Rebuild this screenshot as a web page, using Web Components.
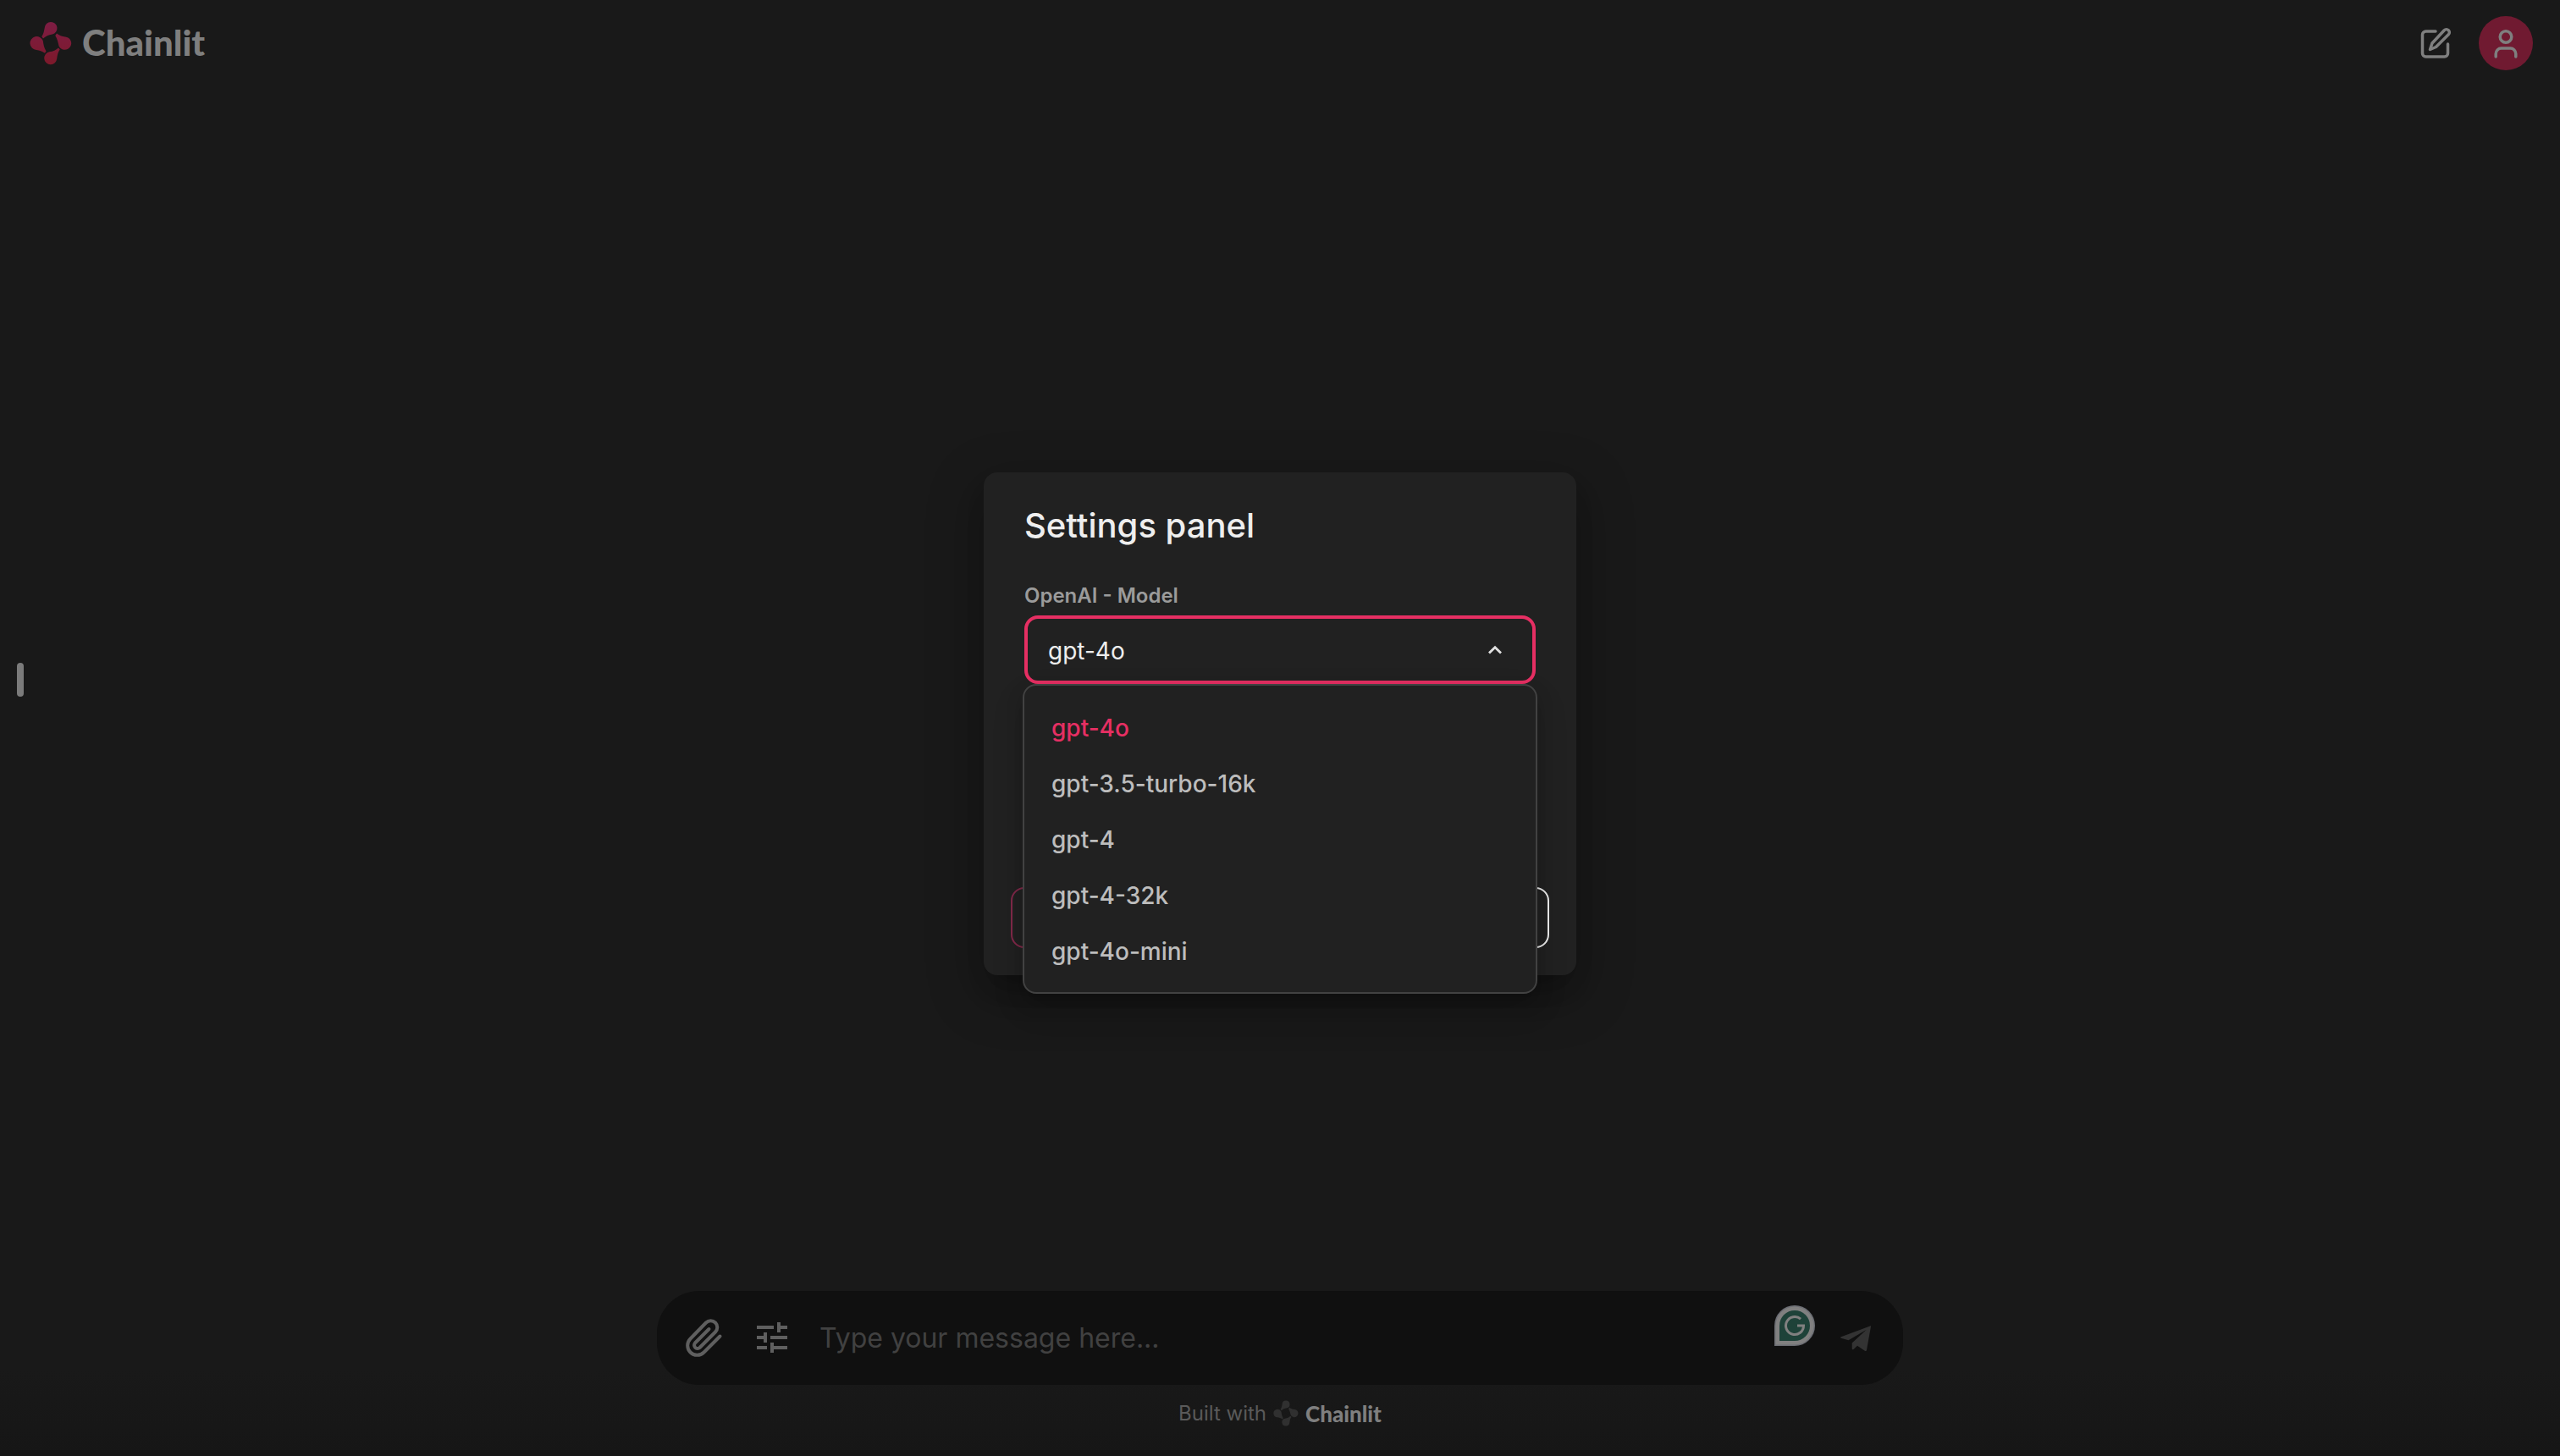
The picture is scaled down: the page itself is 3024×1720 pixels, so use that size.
<!DOCTYPE html>
<html lang="en">
<head>
<meta charset="utf-8">
<meta name="viewport" content="width=device-width, initial-scale=1">
<title>Chainlit</title>
<style>
  html, body { height: 100%; }
  body { margin: 0; background: #191919; font-family: Inter, "Liberation Sans", sans-serif; }
</style>
</head>
<body>
<chat-app></chat-app>
<script>
const define = (name, html, setup) => {
  const tpl = document.createElement('template');
  tpl.innerHTML = html;
  customElements.define(name, class extends HTMLElement {
    constructor() {
      super();
      this.attachShadow({ mode: 'open' }).append(tpl.content.cloneNode(true));
    }
    connectedCallback() { if (setup) setup(this, this.shadowRoot); }
  });
};

define('chain-mark', `
<style>
  :host { display: block; width: 50px; height: 52px; flex: none; }
  svg { display: block; width: 100%; height: 100%; }
</style>
<svg viewBox="0 0 50 52" aria-hidden="true">
  <defs>
    <linearGradient id="g" gradientUnits="userSpaceOnUse" x1="0" y1="0" x2="0" y2="52">
      <stop offset="0" stop-color="var(--mark-from, #7d1d44)"/><stop offset="1" stop-color="var(--mark-to, #7d192a)"/>
    </linearGradient>
  </defs>
  <g fill="url(#g)">
    <path d="M25 1a7.4 7.4 0 0 1 1.8 14.6C22 16.500 19 18 16 20.500L14.300 18.200C16.500 15 17 12 17.700 8A7.400 7.400 0 0 1 25 1Z"/>
    <path d="M32 14.500C35 17 38 18 42 18.400A7.700 7.700 0 1 1 34.600 29.500C33.500 25 33 21.500 30.300 17Z"/>
    <path d="M34 31.500L35.700 33.500C33.300 37 32.800 40 32.200 44.300A7.500 7.500 0 1 1 23.300 36.300C28 35.700 31 34.200 34 31.500Z"/>
    <path d="M18 37.800C14.500 35.300 12 34.300 8 33.900A7.900 7.900 0 1 1 15.700 23C16.500 28 17 31.500 19.500 35.500Z"/>
  </g>
</svg>`);

define('brand-name', `
<style>
  :host { display: block; padding-bottom: 2px; font: 900 42px/48px Lato, "Open Sans", sans-serif; color: #7f7f7f; }
</style>
<slot></slot>`);

define('app-header', `
<style>
  :host { display: flex; justify-content: space-between; align-items: center; padding: 19px 32px 19px 35px; }
  .brand { display: flex; align-items: center; gap: 12px; height: 64px; text-decoration: none; }
  nav { display: flex; align-items: center; gap: 30px; }
  button { display: grid; place-items: center; border: 0; padding: 0; background: none; width: 40px; height: 40px; }
  svg { display: block; }
  .user { width: 64px; height: 64px; border-radius: 50%; background: #701a31; }
</style>
<a class="brand" href="#" aria-label="Chainlit home"><chain-mark></chain-mark><brand-name>Chainlit</brand-name></a>
<nav>
  <button type="button" aria-label="New chat">
    <svg width="40" height="40" viewBox="0 0 40 40" fill="none" stroke="#7f7f7f" stroke-width="3.500" stroke-linecap="round" stroke-linejoin="round">
      <path d="M19 6H7.500a4 4 0 0 0-4 4V32a4 4 0 0 0 4 4H29.500a4 4 0 0 0 4-4V21"/>
      <path d="M29.300 4.700a3.500 3.500 0 0 1 5 5L19.500 24.500 12.500 27.500 15 20Z"/>
    </svg>
  </button>
  <button type="button" class="user" aria-label="User menu">
    <svg width="40" height="40" viewBox="0 0 40 40" fill="none" stroke="#7f7f7f" stroke-width="3.500" stroke-linecap="round">
      <circle cx="20" cy="12.500" r="6.800"/><path d="M8.200 36V32.500a6.500 6.500 0 0 1 6.500-6.500H25.300a6.500 6.500 0 0 1 6.500 6.500V36"/>
    </svg>
  </button>
</nav>`);

define('message-composer', `
<style>
  :host { display: block; width: 100%; }
  form { display: flex; align-items: center; box-sizing: border-box; height: 111px; margin: 0; padding: 0 36px 0 32px; border-radius: 50px; background: #101010; }
  button { display: block; border: 0; padding: 0; background: none; flex: none; }
  svg { display: block; }
  .tune { margin-left: 32px; }
  input { flex: 1; min-width: 0; margin: 0 0 0 34px; padding: 0; border: 0; outline: 0; background: none; color: #7f7f7f; font: 400 32px/48px Inter, sans-serif; }
  input::placeholder { color: #414141; opacity: 1; }
  .assist { margin: 0 28px 30px 0; }
</style>
<form>
  <button type="button" aria-label="Attach files">
    <svg width="50" height="56" viewBox="1 1 50 56" fill="none" stroke="#5f5f5f" stroke-width="4" stroke-linecap="round" stroke-linejoin="round">
      <path d="M43.500 26.500L24.500 45.500a11.300 11.300 0 0 1-16-16L27 10.500a7.700 7.700 0 0 1 11 11L19.500 40a3.900 3.900 0 0 1-5.500-5.500L30.500 18"/>
    </svg>
  </button>
  <button type="button" class="tune" aria-label="Settings">
    <svg width="44" height="44" viewBox="0 -1 44 44" fill="#5f5f5f">
      <path d="M4 6H24V10H4ZM28 2H32V6H40V10H32V14H28ZM4 18H12V14H16V26H12V22H4ZM20 18H40V22H20ZM4 30H16V34H4ZM20 26H24V30H40V34H24V38H20Z"/>
    </svg>
  </button>
  <input type="text" aria-label="Message" placeholder="Type your message here...">
  <button type="button" class="assist" aria-label="Writing assistant">
    <svg width="48" height="48" viewBox="0 0 48 48">
      <path d="M0 48V24A24 24 0 1 1 24 48Z" fill="#6c6e74"/><path d="M1.500 46.500V24A22.500 22.500 0 1 1 24 46.500Z" fill="#808080"/>
      <path d="M6 42V24A18 18 0 1 1 24 42Z" fill="#1e4239"/>
      <path d="M31 16.200A10.500 10.500 0 1 0 34.500 24H27" fill="none" stroke="#808080" stroke-width="3"/>
    </svg>
  </button>
  <button type="submit" aria-label="Send message">
    <svg width="40" height="40" viewBox="0 0 40 40" fill="#333">
      <path d="M37 5.500C37.500 5 38.200 5.300 38 6L33 33.800C32.800 35 31.800 35.300 30.800 34.700L22 28.700 17.500 33C16.700 33.700 15.700 33.300 15.700 32.200V25.500L32.500 10 11.500 22.300 2.800 19.800C1.800 19.500 2 18.500 2.800 18.200Z"/>
    </svg>
  </button>
</form>`);

define('built-with', `
<style>
  :host { display: block; }
  a { display: flex; align-items: center; justify-content: center; gap: 8px; text-decoration: none; color: #5a5a5a; font-size: 24px; line-height: 30px; }
  chain-mark { width: 30px; height: 31px; --mark-from: #303030; --mark-to: #303030; }
  brand-name { padding: 0; font-size: 26px; line-height: 30px; }
</style>
<a href="#"><span>Built with</span><chain-mark></chain-mark><brand-name>Chainlit</brand-name></a>`);

define('option-list', `
<style>
  :host { display: block; box-sizing: border-box; padding: 17px 0 15px; border: 2px solid #424242; border-radius: 16px; background: #212121; box-shadow: 0 10px 20px rgba(0,0,0,.2), 0 16px 40px rgba(0,0,0,.1); }
</style>
<div role="listbox" aria-label="OpenAI - Model"><slot></slot></div>`);

define('option-item', `
<style>
  :host { display: block; }
  button { display: block; width: 100%; border: 0; margin: 0; padding: 0 32px; background: none; text-align: left; font: 500 28px/66px Inter, sans-serif; color: #bdbdbd; }
  :host([selected]) button { color: #e62f63; }
</style>
<button type="button" role="option"><slot></slot></button>`,
(host, root) => root.querySelector('button').setAttribute('aria-selected', host.hasAttribute('selected')));

define('model-select', `
<style>
  :host { display: block; position: relative; }
  label { display: block; margin: 0 2px 7px; font-size: 24px; line-height: 32px; font-weight: 600; color: #9b9b9b; }
  .field { display: grid; align-items: center; margin: 0 2px; }
  select { grid-area: 1 / 1; appearance: none; width: 100%; height: 81px; box-sizing: border-box; margin: 0; padding: 2px 80px 0 24px; border: 4px solid #e62f63; border-radius: 16px; outline: 0; background: #212121; color: #eee; font: 400 28px/40px Inter, sans-serif; }
  svg { grid-area: 1 / 1; justify-self: end; margin-right: 38px; pointer-events: none; }
  option-list { position: absolute; top: 100%; left: 0; right: 0; }
</style>
<label for="model">OpenAI - Model</label>
<div class="field">
  <select id="model"><option>gpt-4o</option></select>
  <svg width="20" height="12" viewBox="0 0 20 12" fill="none" stroke="#e0e0e0" stroke-width="2.800"><path d="M3 9.500L10 2.700 17 9.500"/></svg>
</div>
<option-list>
  <option-item selected>gpt-4o</option-item>
  <option-item>gpt-3.5-turbo-16k</option-item>
  <option-item>gpt-4</option-item>
  <option-item>gpt-4-32k</option-item>
  <option-item>gpt-4o-mini</option-item>
</option-list>`);

define('settings-panel', `
<style>
  :host { display: block; box-sizing: border-box; width: 700px; max-width: 100%; border-radius: 16px; background: #212121; box-shadow: 0 20px 30px -10px rgba(0,0,0,.2), 0 20px 60px 10px rgba(0,0,0,.22); }
  h2 { margin: 0; padding: 31px 48px 35px; font-size: 40px; line-height: 64px; font-weight: 500; color: #eee; }
  model-select { margin: 0 46px; }
  footer { display: flex; gap: 16px; padding: 240px 32px 32px; }
  button { flex: 1; height: 72px; box-sizing: border-box; border: 2px solid #82294a; border-radius: 16px; background: none; }
  .confirm { border-color: #eee; }
</style>
<section role="dialog" aria-labelledby="title">
  <h2 id="title">Settings panel</h2>
  <model-select></model-select>
  <footer><button type="button" aria-label="Cancel"></button><button type="button" class="confirm" aria-label="Confirm"></button></footer>
</section>`);

define('chat-app', `
<style>
  :host { display: flex; flex-direction: column; min-height: 100vh; box-sizing: border-box; position: relative; background: linear-gradient(#191919 94%, #161616); }
  main { flex: 1; display: flex; align-items: center; padding-left: 20px; }
  .handle { width: 8px; height: 40px; padding: 0; border: 0; border-radius: 4px; background: #7b7b7b; margin-bottom: 22px; }
  .bottom { box-sizing: border-box; width: 100%; max-width: 1520px; margin: 0 auto; padding: 0 24px 35px; }
  built-with { margin-top: 18px; }
  .overlay { position: absolute; inset: 0 0 10px; display: grid; place-items: center; }
</style>
<app-header></app-header>
<main><button type="button" class="handle" aria-label="Open sidebar"></button></main>
<div class="bottom"><message-composer></message-composer><built-with></built-with></div>
<div class="overlay"><settings-panel></settings-panel></div>`);
</script>
</body>
</html>
